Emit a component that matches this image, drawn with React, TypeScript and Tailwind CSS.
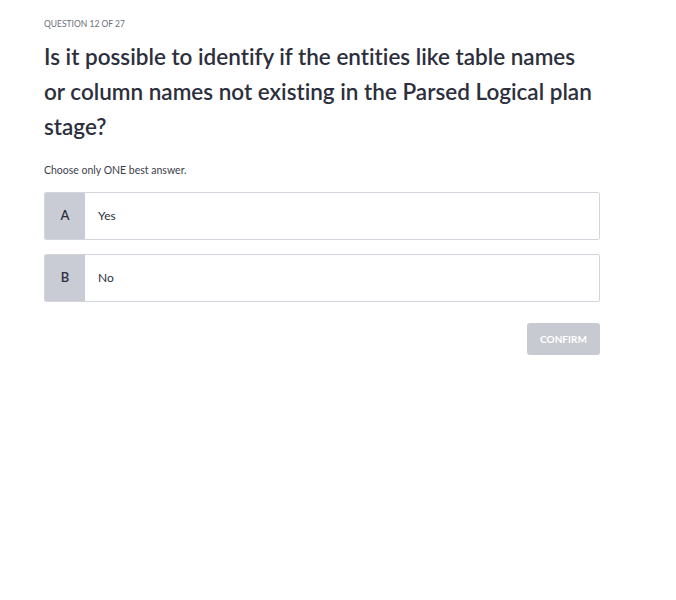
import React from "react";

const options = [
  { key: "A", label: "Yes" },
  { key: "B", label: "No" },
];

export default function App() {
  return (
    <div className="min-h-[600px] bg-white px-[44px] pt-[18px] font-['Lato','Liberation_Sans',sans-serif] text-[#2d2f3d] [font-variant-ligatures:none]">
      <div className="w-[556px]">
        <p className="text-[8.5px] uppercase text-[#6a6f7b] leading-[12px]">
          Question 12 of 27
        </p>
        <h1 className="mt-[9px] text-[22.5px] font-semibold leading-[35px] text-[#2d2f3d]">
          Is it possible to identify if the entities like table names or column names not existing in the Parsed Logical plan stage?
        </h1>
        <p className="mt-[19px] text-[10.5px] leading-[14px] text-[#3b3e4a]">
          Choose only ONE best answer.
        </p>
        <div className="mt-[15px] flex flex-col gap-[14px]">
          {options.map((o) => (
            <button
              key={o.key}
              className="flex h-[48px] w-full items-stretch overflow-hidden rounded-[2px] border border-[#d4d5dc] bg-white text-left"
            >
              <span className="flex w-[40px] items-center justify-center bg-[#caccd5] text-[13px] font-semibold text-[#2d2f3d]">
                {o.key}
              </span>
              <span className="flex items-center pl-[13px] text-[12px] text-[#2d2f3d]">
                {o.label}
              </span>
            </button>
          ))}
        </div>
        <div className="mt-[21px] flex justify-end">
          <button className="h-[32px] w-[73px] rounded-[3px] bg-[#c8cad1] text-[10px] font-bold uppercase text-white">
            Confirm
          </button>
        </div>
      </div>
    </div>
  );
}
